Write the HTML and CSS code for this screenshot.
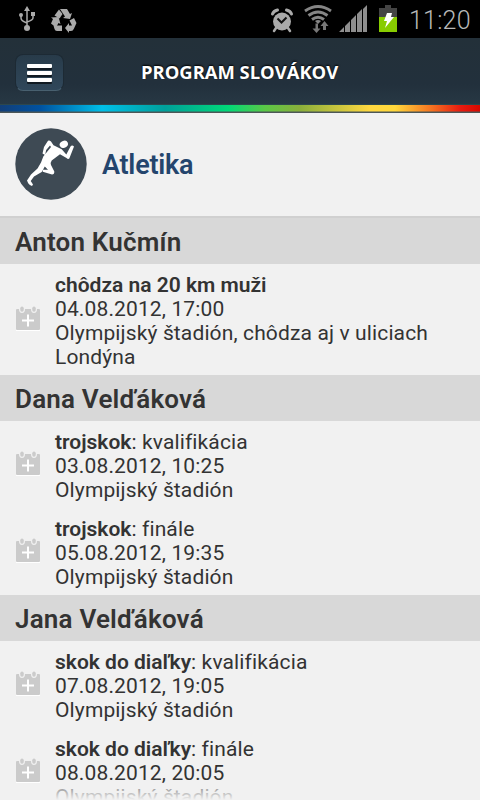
FILE: index.html
```
<!DOCTYPE html>
<html lang="sk">
<head>
<meta charset="utf-8">
<title>Program Slovákov</title>
<link rel="stylesheet" href="styles.css">
</head>
<body>
<svg class="defs" width="0" height="0">
  <symbol id="cal" viewBox="0 0 26 28">
    <path d="M1 24h24v2H1z" fill="#fff"/>
    <path d="M1 5q0-1 1-1h2q0 4 3 4t3-4h6q0 4 3 4t3-4h2q1 0 1 1v19q0 1-1 1H2q-1 0-1-1z" fill="#cbcbcb"/>
    <rect x="5.3" y="1.5" width="3.4" height="5.3" rx="1.7" fill="#cbcbcb"/>
    <rect x="17.3" y="1.5" width="3.4" height="5.3" rx="1.7" fill="#cbcbcb"/>
    <path d="M13 9.5v12M7 15.5h12" stroke="#fff" stroke-width="2"/>
  </symbol>
</svg>
<div class="screen">
  <div class="status">
    <svg class="usb" width="18" height="26" viewBox="0 0 18 26" fill="none" stroke="#aaa" stroke-width="1.5">
      <path d="M9 4v17M3 9v3q0 3 6 5M15 8v4q0 2-6 4"/>
      <path d="M9 0l3 5H6z" fill="#aaa" stroke="none"/>
      <circle cx="3" cy="9" r="2" fill="#aaa" stroke="none"/>
      <path d="M13 6h4v4h-4z" fill="#aaa" stroke="none"/>
      <circle cx="9" cy="22" r="3" fill="#aaa" stroke="none"/>
    </svg>
    <svg class="recycle" width="27" height="25" viewBox="0 0 27 25" fill="#aaa">
      <path d="M10 1h7l3 5 2-1-2 6-7-1 2-1.500z"/>
      <path d="M9 1.500l3.500 4.500-3 4.500-5-3z"/>
      <path d="M1 9.500l7.500-.5 2 7-2-1-2.500 4.500-5-4 2-4.500z"/>
      <path d="M3.500 17.500H12v5.500H7q-2 0-2.500-2z"/>
      <path d="M19.500 12.500l4.500-2.500 2.500 5-2.500 5.500q-1 2.500-3 2.500h-2v2l-4-5 4-5v2.500h3z"/>
    </svg>
    <div class="spacer"></div>
    <svg class="alarm" width="24" height="25" viewBox="0 0 24 25">
      <g stroke="#aaa" stroke-linecap="round"><path d="M2.500 6q1-3 5-4M21.500 6q-1-3-5-4" stroke-width="3" fill="none"/><path d="M6 20l-2 3M18 20l2 3" stroke-width="2.500"/></g>
      <circle cx="12" cy="13.500" r="9" fill="#aaa"/>
      <path d="M7.500 10.500l4 4 5-5" fill="none" stroke="#111" stroke-width="2"/>
    </svg>
    <svg class="wifi" width="28" height="28" viewBox="0 0 28 28">
      <g fill="none" stroke="#858585" stroke-width="2.900"><path d="M1 6q13-9 26 0M4.500 10.500q9.500-7 19 0M8 14.500q6-4.500 12 0"/></g>
      <path d="M11 16q3-2 6 0l-3 3z" fill="#858585"/>
      <path d="M11.500 18.500h2.500v5h2.500l-4 4.500-4-4.500h3zM19 25v-4h-2.500l4-5 4 5H22v4z" fill="#777"/>
    </svg>
    <svg class="signal" width="29" height="28" viewBox="0 0 29 28" fill="#8e8e8e">
      <path d="M0 27l5-5v5zM6 21l5-5v11H6zM12 15l5-5v17h-5zM18 9l5-5v23h-5zM24 4l4-4v27h-4z"/>
    </svg>
    <svg class="battery" width="18" height="27" viewBox="0 0 18 27">
      <path d="M6 0h6v3h6v9H0V3h6z" fill="#444"/>
      <path d="M0 12h18v15H0z" fill="#8c0"/>
      <path d="M8 8h5l-1 4h3L6 23l2-7H5z" fill="#fff"/>
    </svg>
    <span class="clock">11:20</span>
  </div>
  <header class="bar">
    <div class="menu"><i></i><i></i><i></i></div>
    <h1>PROGRAM SLOVÁKOV</h1>
  </header>
  <div class="rainbow"></div>
  <div class="sport">
    <svg width="72" height="72" viewBox="0 0 72 72">
      <circle cx="36" cy="36" r="35.700" fill="#3e4a54"/>
      <g fill="#fff">
        <ellipse cx="48.800" cy="16.300" rx="4.300" ry="3.400" transform="rotate(-25 48.800 16.300)"/>
        <path d="M33 12.700Q34.500 12 36 13.500L38.500 17.300 46.700 21.300 51.300 26.500 55.500 18.500Q57 16.500 59 18.500L54.300 30.500Q53 31.500 51.500 30L45 26.300 36.700 32.500Q35 35 36 37L39.300 43.500Q39.500 46.500 37 46.500L27.700 43.800 28 41.500 33 41.800 29.800 38.500 26.700 44 19 48.500 15.700 53 18 56.500 17 58Q13.500 57 12 52.500L16 46.500 22.500 40.500 26 34.500 28.300 28.500 36 19 35 17.500 31.200 22 30 27 27.500 25.500 29 19z"/>
      </g>
    </svg>
    <h2>Atletika</h2>
  </div>
  <h3>Anton Kučmín</h3>
  <div class="item"><svg class="cal"><use href="#cal"/></svg><p><b>chôdza na 20 km muži</b><br>04.08.2012, 17:00<br>Olympijský štadión, chôdza aj v uliciach Londýna</p></div>
  <h3>Dana Velďáková</h3>
  <div class="item"><svg class="cal"><use href="#cal"/></svg><p><b>trojskok</b>: kvalifikácia<br>03.08.2012, 10:25<br>Olympijský štadión</p></div>
  <div class="item"><svg class="cal"><use href="#cal"/></svg><p><b>trojskok</b>: finále<br>05.08.2012, 19:35<br>Olympijský štadión</p></div>
  <h3>Jana Velďáková</h3>
  <div class="item"><svg class="cal"><use href="#cal"/></svg><p><b>skok do diaľky</b>: kvalifikácia<br>07.08.2012, 19:05<br>Olympijský štadión</p></div>
  <div class="item"><svg class="cal"><use href="#cal"/></svg><p><b>skok do diaľky</b>: finále<br>08.08.2012, 20:05<br>Olympijský štadión</p></div>
  <div class="fade"></div>
</div>
</body>
</html>
```
FILE: styles.css
```
* { box-sizing: border-box; margin: 0; padding: 0; }
body { font-family: Roboto, sans-serif; color: #333; background: #f1f1f1; overflow: hidden; }
.defs { display: block; }
.screen { position: relative; width: 480px; height: 800px; overflow: hidden; background: #f1f1f1; }
.status { display: flex; height: 38px; background: #000; padding: 0 9px 0 18px; }
.status svg { flex: none; }
.spacer { flex: 1; }
.usb { margin-top: 6px; }
.recycle { margin: 8px 0 0 14px; }
.alarm { margin: 8px 10px 0 0; }
.wifi { margin: 5px 7px 0 0; }
.signal { margin: 5px 11px 0 0; }
.battery { margin: 5px 12px 0 0; }
.clock { font-size: 25px; line-height: 41px; color: #b8b8b8; font-weight: 300; width: 62px; white-space: nowrap; letter-spacing: .2px; }
.bar { display: flex; align-items: center; height: 66px; padding: 2px 15px 0; background: linear-gradient(#233039, #22303c 70%, #273844); }
.menu { width: 49px; height: 37px; border-radius: 8px; background: linear-gradient(#283b4a, #30475a); border: 1px solid #1d2a34; border-bottom-color: #48606f; display: flex; flex-direction: column; align-items: center; padding-top: 9px; gap: 3px; }
.menu i { width: 25px; height: 4px; background: #fff; border-radius: 1px; box-shadow: 0 2px 0 #111a22; }
h1 { margin-left: 77px; font: bold 18.400px/24px "Open Sans", sans-serif; color: #fff; text-shadow: 0 -1px 2px #000; white-space: nowrap; }
.rainbow { height: 9px; background: linear-gradient(transparent 6px, #4c5757 7px), linear-gradient(90deg, #123e78 0, #0052a0 40px, #00bfe8 102px, #00a09b 165px, #00d978 228px, #5ac846 265px, #8aaf3b 300px, #ffd840 370px, #ffd83c 395px, #f57722 430px, #e81c10 460px, #d80800 480px); border-top: 1px solid #2d474c; }
.sport { display: flex; align-items: center; height: 105px; padding: 0 15px 2px; gap: 15px; border-bottom: 2px solid #d0d0d0; }
h2 { font-size: 27px; line-height: 36px; color: #24456d; font-weight: 600; padding-top: 2px; letter-spacing: -.25px; }
h3 { height: 46px; padding: 2px 15px 0; background: #d8d8d8; font-size: 26px; line-height: 45px; font-weight: 600; letter-spacing: .2px; white-space: nowrap; }
.item { display: flex; align-items: center; padding: 9px 15px 6px; }
.cal { flex: none; width: 26px; height: 28px; margin: -4px 14px 0 0; }
p { font-size: 21px; line-height: 24px; letter-spacing: .13px; }
b { font-weight: 600; letter-spacing: 0; }
.fade { position: absolute; left: 0; right: 0; bottom: 0; height: 16px; background: linear-gradient(rgba(241,241,241,.4), #f1f1f1); }
```
